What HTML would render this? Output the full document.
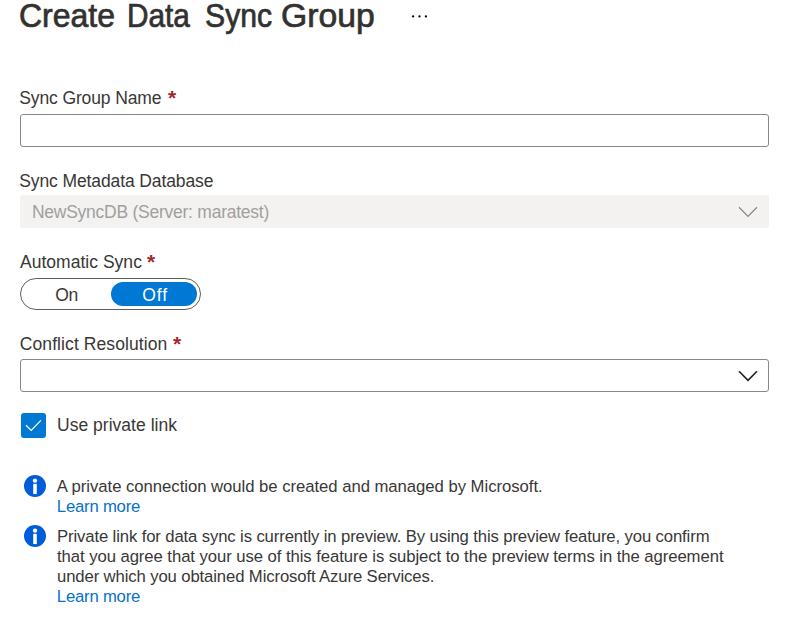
<!DOCTYPE html>
<html lang="en">
<head>
<meta charset="utf-8">
<title>Create Data Sync Group</title>
<style>
  html, body { margin: 0; padding: 0; }
  body {
    width: 795px; height: 640px; overflow: hidden; position: relative;
    background: #ffffff;
    font-family: "Liberation Sans", sans-serif;
    color: #323130;
  }
  .abs { position: absolute; white-space: nowrap; }
  h1 { margin: 0; padding: 0; font-size: 0; line-height: 0; font-weight: 400; position: absolute; left: 0; top: 0; }
  .title {
    left: 19.6px; top: -2.2px; font-size: 33px; line-height: 36px; font-weight: 400;
    color: #323130; -webkit-text-stroke: 0.7px #323130; letter-spacing: 0px; transform-origin: 0 0;
  }
  .label { left: 20px; font-size: 17.5px; line-height: 20px; color: #383736; }
  .req { color: #a4262c; font-size: 21px; font-weight: 700; line-height: 40px; }
  .box {
    left: 20px; width: 749px; height: 33px; box-sizing: border-box;
    border: 1px solid #8a8886; border-radius: 3px; background: #fff;
  }
  .box.disabled { border: none; background: #f3f2f1; }
  .ddtext { left: 33px; font-size: 17.5px; line-height: 20px; color: #a19f9d; }
  .toggle {
    left: 20px; top: 278px; width: 181px; height: 32px; box-sizing: border-box;
    border: 1px solid #605e5c; border-radius: 16px; background: #fff;
  }
  .pill { left: 111px; top: 282px; width: 86px; height: 24px; border-radius: 12px; background: #0078d4; }
  .tog { font-size: 17px; line-height: 20px; text-align: center; width: 86px; }
  .check { left: 21px; top: 413px; width: 25px; height: 25px; border-radius: 3px; background: #0078d4; }
  .txt { left: 57px; font-size: 16.7px; line-height: 20px; color: #383736; }
  .link { color: #0a6fc9; }
  svg { position: absolute; overflow: visible; }
</style>
</head>
<body>

<h1 id="title"><span class="abs title" style="left:19.17px; transform:scaleX(0.9699);">Create</span> <span class="abs title" style="left:127.26px; transform:scaleX(0.9019);">Data</span> <span class="abs title" style="left:204.77px; transform:scaleX(0.9153);">Sync</span> <span class="abs title" style="left:281.0px; transform:scaleX(1.0224);">Group</span></h1>
<svg style="left:405px; top:6px;" width="30" height="20" viewBox="0 0 30 20">
  <circle cx="8.1" cy="10.45" r="1.15" fill="#000"/><circle cx="14.5" cy="10.45" r="1.15" fill="#000"/><circle cx="20.9" cy="10.45" r="1.15" fill="#000"/>
</svg>

<div class="abs label" id="l1" style="left:19.2px; top:88px; letter-spacing:-0.114px;">Sync Group Name</div>
<div class="abs req" style="left:168px; top:78px;">*</div>
<div class="abs box" style="top:114px;"></div>

<div class="abs label" id="l2" style="left:19.3px; top:171px; letter-spacing:-0.114px;">Sync Metadata Database</div>
<div class="abs box disabled" style="top:195px;"></div>
<div class="abs ddtext" id="dd" style="left:31.9px; top:202px; letter-spacing:-0.25px;">NewSyncDB (Server: maratest)</div>
<svg style="left:738px; top:206px;" width="20" height="12" viewBox="0 0 20 12">
  <path d="M1 1.2 L10 10.4 L19 1.2" fill="none" stroke="#8a8886" stroke-width="1.3"/>
</svg>

<div class="abs label" id="l3" style="left:20px; top:252px; letter-spacing:0.023px;">Automatic Sync</div>
<div class="abs req" style="left:147px; top:242px;">*</div>
<div class="abs toggle"></div>
<div class="abs pill"></div>
<div class="abs label" id="on" style="left:55.2px; top:285px; letter-spacing:-0.4px;">On</div>
<div class="abs label" id="off" style="left:142.3px; top:285px; letter-spacing:0.9px; color:#ffffff;">Off</div>

<div class="abs label" id="l4" style="left:19.8px; top:334px; letter-spacing:0.085px;">Conflict Resolution</div>
<div class="abs req" style="left:173px; top:324px;">*</div>
<div class="abs box" style="top:359px;"></div>
<svg style="left:738px; top:370px;" width="20" height="12" viewBox="0 0 20 12">
  <path d="M1 1.2 L10 10.4 L19 1.2" fill="none" stroke="#201f1e" stroke-width="1.6"/>
</svg>

<div class="abs check"></div>
<svg style="left:21px; top:413px;" width="25" height="25" viewBox="0 0 25 25">
  <path d="M5 12.2 L10.2 17.4 L19.9 7.4" fill="none" stroke="#ffffff" stroke-width="1.25"/>
</svg>
<div class="abs label" id="cb" style="left:57px; top:415px; letter-spacing:0.023px;">Use private link</div>

<svg style="left:24px; top:475px;" width="22" height="22" viewBox="0 0 22 22">
  <circle cx="11" cy="11" r="11" fill="#015cda"/>
  <circle cx="11" cy="5.6" r="2.2" fill="#fff"/>
  <rect x="9.2" y="8.8" width="3.6" height="10.3" fill="#fff"/>
</svg>
<div class="abs txt" id="t1" style="left:56.8px; top:477px; letter-spacing:-0.034px;">A private connection would be created and managed by Microsoft.</div>
<div class="abs txt link" id="t2" style="left:56.8px; top:497px; letter-spacing:-0.2px;">Learn more</div>

<svg style="left:24px; top:525px;" width="22" height="22" viewBox="0 0 22 22">
  <circle cx="11" cy="11" r="11" fill="#015cda"/>
  <circle cx="11" cy="5.6" r="2.2" fill="#fff"/>
  <rect x="9.2" y="8.8" width="3.6" height="10.3" fill="#fff"/>
</svg>
<div class="abs txt" id="t3" style="left:57px; top:527px; letter-spacing:-0.124px;">Private link for data sync is currently in preview. By using this preview feature, you confirm</div>
<div class="abs txt" id="t4" style="left:57px; top:547px; letter-spacing:-0.065px;">that you agree that your use of this feature is subject to the preview terms in the agreement</div>
<div class="abs txt" id="t5" style="left:57px; top:567px; letter-spacing:-0.118px;">under which you obtained Microsoft Azure Services.</div>
<div class="abs txt link" id="t6" style="left:56.8px; top:587px; letter-spacing:-0.2px;">Learn more</div>

</body>
</html>
